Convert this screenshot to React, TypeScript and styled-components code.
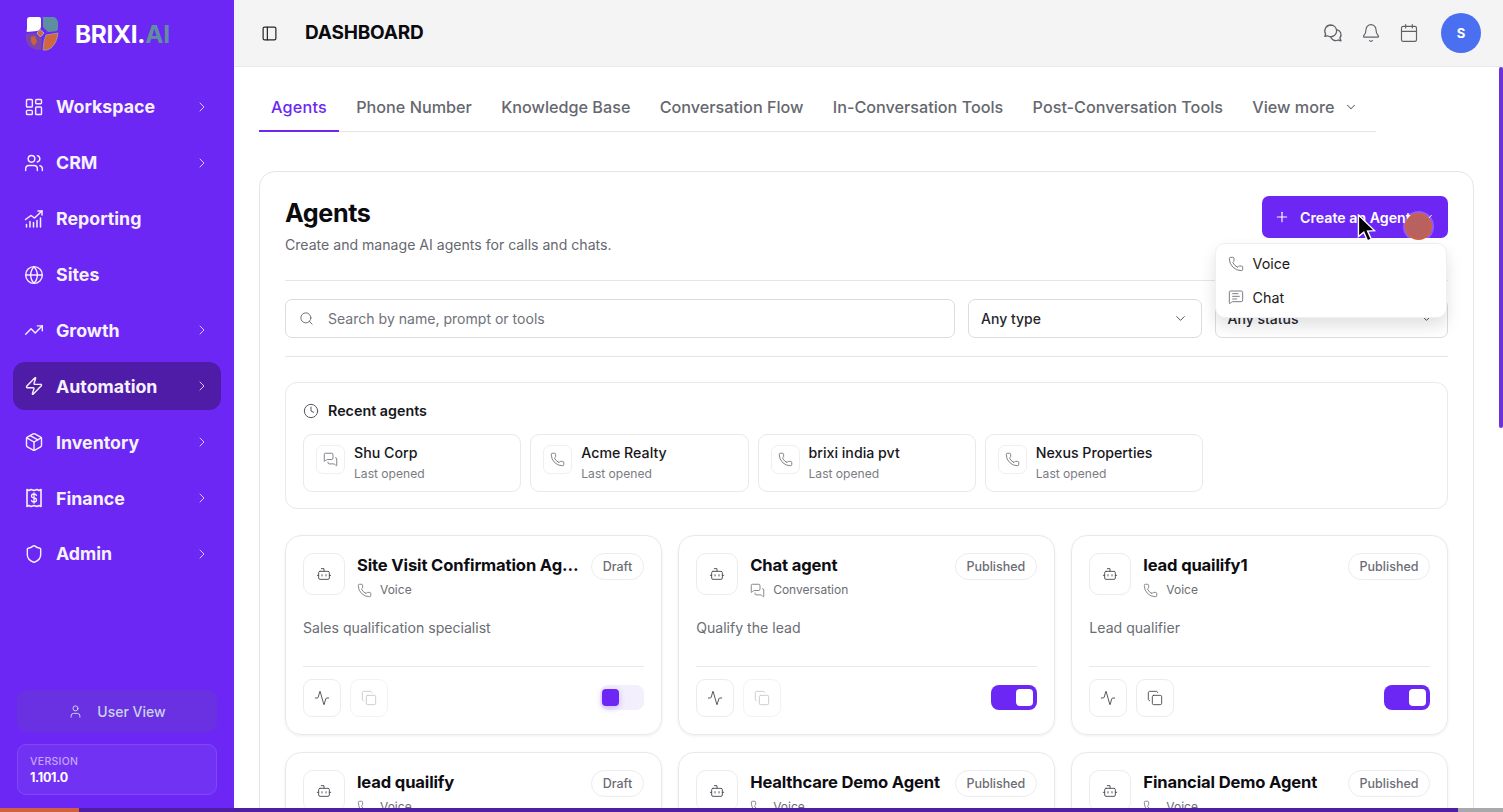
import React from "react";
import styled, { createGlobalStyle } from "styled-components";
import {
  LayoutDashboard, Users, Globe, TrendingUp, Zap, Package, Shield,
  ChevronRight, ChevronDown, User, MessagesSquare, Bell, Calendar, PanelLeft, Plus, Search, Clock,
  Phone, MessageSquareText, Bot, Activity, Copy,
} from "lucide-react";

const Global = createGlobalStyle`
  * { box-sizing: border-box; }
  html, body { margin: 0; height: 100%; overflow: hidden; background: #fff; }
  body { font-family: Inter, "Liberation Sans", sans-serif; color: #0b0b0f; }
`;

const Shell = styled.div`display: flex; width: 1503px; height: 812px; overflow: hidden; position: relative;`;
const Sidebar = styled.aside`width: 234px; flex: none; background: #6c27f5; display: flex; flex-direction: column; padding: 0 13px;`;
const LogoRow = styled.div`height: 83px; display: flex; align-items: flex-start; padding: 15px 0 0 11px; gap: 15px;`;
const LogoText = styled.div`font-size: 24.4px; font-weight: 700; color: #fff; line-height: 38px; letter-spacing: -0.3px;`;
const LogoAccent = styled.span`color: #5f8f9f;`;
const Nav = styled.nav`display: flex; flex-direction: column; gap: 8px;`;
const NavItem = styled.div<{ $active?: boolean }>`
  height: 47.875px; border-radius: 12px; display: flex; align-items: center; padding: 0 11px 0 11px; gap: 12px;
  background: ${(p) => (p.$active ? "#4f1ca8" : "transparent")}; color: #f6f1ff;
  font-size: 17.8px; font-weight: 700;
`;
const NavLabel = styled.span`flex: 1;`;
const SideBottom = styled.div`margin-top: auto; padding: 0 4px 17px; display: flex; flex-direction: column; gap: 12px;`;
const UserViewBtn = styled.div`
  height: 42px; border-radius: 10px; background: #6a31e3; color: #c9d3ee; display: flex; align-items: center; justify-content: center; gap: 14px;
  font-size: 14px; font-weight: 500;
`;
const VersionBox = styled.div`height: 51px; border-radius: 9px; background: #7232f3; border: 1px solid #8048f5; padding: 10px 12px; display: flex; flex-direction: column; gap: 1px;`;
const VersionLabel = styled.div`font-size: 10.5px; font-weight: 500; color: #c3a6fa; line-height: 14px; letter-spacing: 0.3px;`;
const VersionValue = styled.div`font-size: 12.5px; font-weight: 700; color: #fff; line-height: 16px; letter-spacing: -0.3px;`;

const Main = styled.div`flex: 1; min-width: 0; display: flex; flex-direction: column;`;
const Header = styled.header`height: 67px; flex: none; background: #f4f4f5; border-bottom: 1px solid #e9e9ec; display: flex; align-items: center; padding: 0 22px 0 27px;`;
const PageTitle = styled.h1`margin: 0 0 0 27px; font-size: 19px; font-weight: 700; line-height: 24px; letter-spacing: -0.2px; flex: 1;`;
const HeaderIcons = styled.div`display: flex; align-items: center; gap: 18px; color: #5f6368; margin-right: 22px;`;
const Avatar = styled.div`width: 40px; height: 40px; border-radius: 50%; background: #4a6ff0; color: #fff; font-size: 13px; font-weight: 700; display: flex; align-items: center; justify-content: center;`;

const Content = styled.main`flex: 1; min-height: 0; overflow: hidden; padding: 18px 29px 0 25px;`;
const Tabs = styled.div`width: 1117px; height: 47px; border-bottom: 1px solid #e6e6e9; display: flex; gap: 5.3px;`;
const Tab = styled.div<{ $active?: boolean }>`
  height: 47px; padding: 0 12px 1px; display: flex; align-items: center; gap: 10px; font-size: 16.2px; font-weight: 500; white-space: nowrap;
  color: ${(p) => (p.$active ? "#6c27f5" : "#66686f")};
  letter-spacing: ${(p) => (p.$active ? "0.2px" : "0")};
  border-bottom: 2px solid ${(p) => (p.$active ? "#6c27f5" : "transparent")};
`;
const Panel = styled.section`margin-top: 39px; width: 1215px; border: 1px solid #e6e6e9; border-radius: 16px; padding: 24px 25px 0;`;
const PanelHead = styled.div`display: flex; justify-content: space-between; align-items: flex-start; height: 85px; border-bottom: 1px solid #e6e6e9;`;
const PanelTitle = styled.h2`margin: 2px 0 0; font-size: 25.2px; font-weight: 700; line-height: 30px; letter-spacing: -0.4px;`;
const PanelSub = styled.p`margin: 7px 0 0; font-size: 14.08px; line-height: 20px; color: #66686f;`;
const CreateBtn = styled.button`
  width: 186px; height: 42px; border: 0; border-radius: 7px; background: #6c27f5; color: #fff; display: flex; align-items: center; gap: 10px; padding: 0 0 0 12px;
  font: 600 14.2px Inter, sans-serif; white-space: nowrap;
`;
const Filters = styled.div`display: flex; gap: 13px; padding: 18px 0 18px; border-bottom: 1px solid #e6e6e9;`;
const SearchBox = styled.div`flex: 1; height: 39px; border: 1px solid #dcdce0; border-radius: 7px; display: flex; align-items: center; gap: 14px; padding: 0 13px; font-size: 14.05px; color: #70727a;`;
const Select = styled.div`width: 233.5px; flex: none; height: 39px; border: 1px solid #dcdce0; border-radius: 7px; display: flex; align-items: center; justify-content: space-between; padding: 0 13px 0 12px; font-size: 14px; font-weight: 500; color: #26262c;`;
const RecentBox = styled.div`margin-top: 25px; height: 127px; border: 1px solid #e9e9ec; border-radius: 12px; padding: 19px 17px;`;
const RecentHead = styled.div`display: flex; align-items: center; gap: 9px; font-size: 14.3px; font-weight: 600; line-height: 18px; color: #17171c;`;
const RecentRow = styled.div`display: flex; gap: 9px; margin-top: 14px;`;
const RecentCard = styled.div`width: 218.25px; height: 58px; border: 1px solid #e9e9ec; border-radius: 9px; display: flex; align-items: flex-start; gap: 9px; padding: 10px 12px;`;
const RecentIcon = styled.div`width: 29px; height: 29px; border: 1px solid #efeff1; border-radius: 7px; display: flex; align-items: center; justify-content: center; color: #66686f; flex: none;`;
const RecentName = styled.div`font-size: 14.2px; font-weight: 500; line-height: 18px; margin-top: -1px; color: #17171c;`;
const RecentMeta = styled.div`font-size: 12.1px; line-height: 16px; margin-top: 4px; color: #7a7c83;`;

const Grid = styled.div`margin-top: 26px; display: grid; grid-template-columns: repeat(3, 376.67px); column-gap: 16.5px; row-gap: 17px;`;
const Card = styled.article`height: 200px; border: 1px solid #e9e9ec; border-radius: 16px; box-shadow: 0 1px 3px rgba(0,0,0,.07); padding: 17px; display: flex; flex-direction: column;`;
const CardTop = styled.div`display: flex; align-items: flex-start;`;
const BotBox = styled.div`width: 42px; height: 42px; margin-right: 12px; border: 1px solid #ececef; border-radius: 10px; display: flex; align-items: center; justify-content: center; color: #4a4c52; flex: none;`;
const CardInfo = styled.div`flex: 1; min-width: 0;`;
const CardName = styled.div`font-size: 16.6px; font-weight: 700; line-height: 24px; letter-spacing: -0.15px; white-space: nowrap; overflow: hidden; text-overflow: ellipsis; color: #0d0d12;`;
const CardType = styled.div`display: flex; align-items: center; gap: 8px; font-size: 12px; line-height: 16px; color: #6b6d74; margin-top: 5px;`;
const Badge = styled.span`flex: none; height: 27px; padding: 0 10.5px; border: 1px solid #ececef; border-radius: 14px; font-size: 12.5px; font-weight: 500; color: #6b6d74; display: flex; align-items: center; margin-left: 8px;`;
const CardDesc = styled.p`margin: 20px 0 0; font-size: 14.1px; line-height: 20px; color: #6b6d74; height: 48px;`;
const CardFoot = styled.div`border-top: 1px solid #e9e9ec; padding-top: 12px; display: flex; align-items: center; gap: 9px;`;
const IconBtn = styled.div<{ $dim?: boolean }>`
  width: 38px; height: 38px; border: 1px solid ${(p) => (p.$dim ? "#f3f3f5" : "#ececef")}; border-radius: 9px; display: flex; align-items: center; justify-content: center;
  color: ${(p) => (p.$dim ? "#c9c9ce" : "#4a4c52")};
`;
const Toggle = styled.div<{ $on: boolean }>`
  margin-left: auto; width: ${(p) => (p.$on ? "46px" : "44px")}; height: 25px; border-radius: 8px; padding: 4px ${(p) => (p.$on ? "4px" : "2px")}; display: flex; margin-top: -2px;
  justify-content: ${(p) => (p.$on ? "flex-end" : "flex-start")};
  background: ${(p) => (p.$on ? "#6c27f5" : "#f3effd")};
`;
const Knob = styled.div<{ $on: boolean }>`
  width: 17px; height: 17px; border-radius: 4px; background: ${(p) => (p.$on ? "#fff" : "#6c27f5")};
  box-shadow: ${(p) => (p.$on ? "none" : "0 2px 6px rgba(108,39,245,.3)")};
`;

const Menu = styled.div`
  position: absolute; left: 1214.5px; top: 243px; width: 232.5px; height: 75px; background: #fff; border-radius: 10px; border: 1px solid #efeff1;
  box-shadow: 0 8px 16px rgba(0,0,0,.12); padding: 3px 0; display: flex; flex-direction: column; z-index: 3;
`;
const MenuItem = styled.div`height: 33.5px; display: flex; align-items: center; gap: 9px; padding: 0 12px; font-size: 14.3px; color: #1a1a20; font-weight: 400;`;
const MenuIcon = styled.span`display: flex; color: #66686f;`;
const ClickDot = styled.div`
  position: absolute; left: 1405px; top: 213px; width: 27px; height: 27px; border-radius: 50%; background: #b8615f; border: 2px solid #d0603f;
  box-shadow: 0 0 0 2px rgba(255,255,255,.25); z-index: 4;
`;
const Cursor = styled.svg`position: absolute; left: 1356px; top: 214px; z-index: 5;`;
const ScrollThumb = styled.div`position: absolute; right: 0; top: 67px; width: 4px; height: 361px; background: #6c33d9; border-radius: 2px; z-index: 2;`;
const ProgressTrack = styled.div`position: absolute; left: 0; right: 0; bottom: 0; height: 4px; background: #a9a9ad; z-index: 6;`;
const ProgressFill = styled.div`width: 1458px; height: 100%; background: #4f1ea5;`;
const ProgressDone = styled.div`width: 79px; height: 100%; background: #d0603f;`;

const Logo = () => (
  <svg width="36" height="38" viewBox="0 0 36 38">
    <path d="M3 5 Q3 2 6 2 H15 Q17 2 17 4 V11 Q17 15 13 16 L3 17 Q2 16 3 14 Z" fill="#fff" />
    <path d="M19 2 H30 Q33 3 34 7 V14 Q34 16 30 16.5 L24 17 L19 12 V4 Q18 2 19 2 Z" fill="#5d8fa0" />
    <path d="M2 19 L13 18 L18 24 L17 35 Q8 35 4 30 Q1 25 2 19 Z" fill="#7a45ad" />
    <path d="M7 22 L11 21 L13 27 L10 31 L7 27 Z" fill="#c8623f" />
    <path d="M22 20 L34 18 Q33 28 27 33 Q23 36 19 35 L20 26 Z" fill="#d0683f" stroke="#9fb0a8" strokeWidth="0.7" />
    <path d="M16 14.5 L20 18 L16.5 22 L13 18 Z" fill="#d0683f" stroke="#9fb8b8" strokeWidth="1" />
  </svg>
);

const ReportIcon = () => (
  <svg width="20" height="20" viewBox="0 0 20 20" fill="none" stroke="currentColor" strokeWidth="1.5" strokeLinecap="round" strokeLinejoin="round">
    <path d="M1.5 10.5 L7 6.5 L10.5 9 L18 2" />
    <path d="M14 2 H18 V6" />
    <path d="M2.5 18 V15.5 M6 18 V12.5 M9.5 18 V13.5 M13 18 V11.5 M16.5 18 V9" />
  </svg>
);

const FinanceIcon = () => (
  <svg width="20" height="20" viewBox="0 0 20 20" fill="none" stroke="currentColor" strokeWidth="1.6" strokeLinecap="round" strokeLinejoin="round">
    <path d="M3 1.5 L5 2.5 L7 1.5 L10 2.5 L13 1.5 L15 2.5 L17 1.5 V18.5 L15 17.5 L13 18.5 L10 17.5 L7 18.5 L5 17.5 L3 18.5 Z" />
    <path d="M12.5 7.5 Q12 6 10 6 Q7.5 6 7.5 8 Q7.5 9.7 10 10 Q12.5 10.3 12.5 12 Q12.5 14 10 14 Q8 14 7.5 12.5 M10 4.8 V15.2" strokeWidth="1.3" />
  </svg>
);

const ChatBubbles = () => (
  <svg width="20" height="20" viewBox="0 0 20 20" fill="none" stroke="currentColor" strokeWidth="1.3" strokeLinecap="round" strokeLinejoin="round">
    <path d="M7.8 2 A6 6 0 0 0 2.6 11 L1.8 13.4 L4.4 12.8 A6 6 0 0 0 13.6 7.4 A6 6 0 0 0 7.8 2 Z" />
    <path d="M13.7 6.6 A5.2 5.2 0 0 1 16.9 15 L18 17.8 L15 17 A5.2 5.2 0 0 1 7.6 13.6" />
  </svg>
);

type NavEntry = { label: string; icon: React.ReactNode; chevron?: boolean; active?: boolean };
const navItems: NavEntry[] = [
  { label: "Workspace", icon: <LayoutDashboard size={20} strokeWidth={1.7} />, chevron: true },
  { label: "CRM", icon: <Users size={20} strokeWidth={1.7} />, chevron: true },
  { label: "Reporting", icon: <ReportIcon /> },
  { label: "Sites", icon: <Globe size={20} strokeWidth={1.7} /> },
  { label: "Growth", icon: <TrendingUp size={20} strokeWidth={1.7} />, chevron: true },
  { label: "Automation", icon: <Zap size={20} strokeWidth={1.7} />, chevron: true, active: true },
  { label: "Inventory", icon: <Package size={20} strokeWidth={1.7} />, chevron: true },
  { label: "Finance", icon: <FinanceIcon />, chevron: true },
  { label: "Admin", icon: <Shield size={20} strokeWidth={1.7} />, chevron: true },
];
const tabs = ["Phone Number", "Knowledge Base", "Conversation Flow", "In-Conversation Tools", "Post-Conversation Tools"];
const recents = [
  { name: "Shu Corp", chat: true },
  { name: "Acme Realty", chat: false },
  { name: "brixi india pvt", chat: false },
  { name: "Nexus Properties", chat: false },
];
const agents = [
  { name: "Site Visit Confirmation Agent", type: "Voice", status: "Draft", desc: "Sales qualification specialist", on: false, dim: true },
  { name: "Chat agent", type: "Conversation", status: "Published", desc: "Qualify the lead", on: true, dim: true },
  { name: "lead quailify1", type: "Voice", status: "Published", desc: "Lead qualifier", on: true, dim: false },
  { name: "lead quailify", type: "Voice", status: "Draft", desc: "", on: false, dim: true },
  { name: "Healthcare Demo Agent", type: "Voice", status: "Published", desc: "", on: true, dim: true },
  { name: "Financial Demo Agent", type: "Voice", status: "Published", desc: "", on: true, dim: true },
];

export default function App() {
  return (
    <Shell>
      <Global />
      <Sidebar>
        <LogoRow>
          <Logo />
          <LogoText>BRIXI.<LogoAccent>AI</LogoAccent></LogoText>
        </LogoRow>
        <Nav>
          {navItems.map((n) => (
            <NavItem key={n.label} $active={n.active}>
              {n.icon}
              <NavLabel>{n.label}</NavLabel>
              {n.chevron && <ChevronRight size={16} strokeWidth={1.5} color="#d9c8fb" />}
            </NavItem>
          ))}
        </Nav>
        <SideBottom>
          <UserViewBtn><User size={15} strokeWidth={1.6} />User View</UserViewBtn>
          <VersionBox>
            <VersionLabel>VERSION</VersionLabel>
            <VersionValue>1.101.0</VersionValue>
          </VersionBox>
        </SideBottom>
      </Sidebar>
      <Main>
        <Header>
          <PanelLeft size={17} strokeWidth={1.7} color="#26262c" />
          <PageTitle>DASHBOARD</PageTitle>
          <HeaderIcons>
            <ChatBubbles />
            <Bell size={20} strokeWidth={1.4} />
            <Calendar size={20} strokeWidth={1.4} />
          </HeaderIcons>
          <Avatar>S</Avatar>
        </Header>
        <Content>
          <Tabs>
            <Tab $active>Agents</Tab>
            {tabs.map((t) => <Tab key={t}>{t}</Tab>)}
            <Tab>View more <ChevronDown size={14} strokeWidth={1.8} /></Tab>
          </Tabs>
          <Panel>
            <PanelHead>
              <div>
                <PanelTitle>Agents</PanelTitle>
                <PanelSub>Create and manage AI agents for calls and chats.</PanelSub>
              </div>
              <CreateBtn><Plus size={16} strokeWidth={1.7} />Create an Agent <ChevronDown size={14} strokeWidth={1.7} /></CreateBtn>
            </PanelHead>
            <Filters>
              <SearchBox><Search size={15} strokeWidth={1.6} />Search by name, prompt or tools</SearchBox>
              <Select>Any type<ChevronDown size={15} strokeWidth={1.6} color="#55575d" /></Select>
              <Select>Any status<ChevronDown size={15} strokeWidth={1.6} color="#55575d" /></Select>
            </Filters>
            <RecentBox>
              <RecentHead><Clock size={16} strokeWidth={1.5} color="#55575d" />Recent agents</RecentHead>
              <RecentRow>
                {recents.map((r) => (
                  <RecentCard key={r.name}>
                    <RecentIcon>{r.chat ? <MessagesSquare size={15} strokeWidth={1.3} /> : <Phone size={15} strokeWidth={1.3} />}</RecentIcon>
                    <div>
                      <RecentName>{r.name}</RecentName>
                      <RecentMeta>Last opened</RecentMeta>
                    </div>
                  </RecentCard>
                ))}
              </RecentRow>
            </RecentBox>
            <Grid>
              {agents.map((a) => (
                <Card key={a.name}>
                  <CardTop>
                    <BotBox><Bot size={16} strokeWidth={1.4} /></BotBox>
                    <CardInfo>
                      <CardName>{a.name}</CardName>
                      <CardType>
                        {a.type === "Voice" ? <Phone size={15} strokeWidth={1.3} /> : <MessagesSquare size={15} strokeWidth={1.3} />}
                        {a.type}
                      </CardType>
                    </CardInfo>
                    <Badge>{a.status}</Badge>
                  </CardTop>
                  <CardDesc>{a.desc}</CardDesc>
                  <CardFoot>
                    <IconBtn><Activity size={16} strokeWidth={1.4} /></IconBtn>
                    <IconBtn $dim={a.dim}><Copy size={16} strokeWidth={1.4} /></IconBtn>
                    <Toggle $on={a.on}><Knob $on={a.on} /></Toggle>
                  </CardFoot>
                </Card>
              ))}
            </Grid>
          </Panel>
        </Content>
      </Main>
      <Menu>
        <MenuItem><MenuIcon><Phone size={16} strokeWidth={1.3} /></MenuIcon>Voice</MenuItem>
        <MenuItem><MenuIcon><MessageSquareText size={16} strokeWidth={1.3} /></MenuIcon>Chat</MenuItem>
      </Menu>
      <ClickDot />
      <Cursor width="22" height="30" viewBox="0 0 20 28">
        <path d="M2 1 L2 21 L7 17 L10.5 25 L14 23.5 L10.5 16 L17 15.5 Z" fill="#000" stroke="#fff" strokeWidth="1.3" />
      </Cursor>
      <ScrollThumb />
      <ProgressTrack><ProgressFill><ProgressDone /></ProgressFill></ProgressTrack>
    </Shell>
  );
}
